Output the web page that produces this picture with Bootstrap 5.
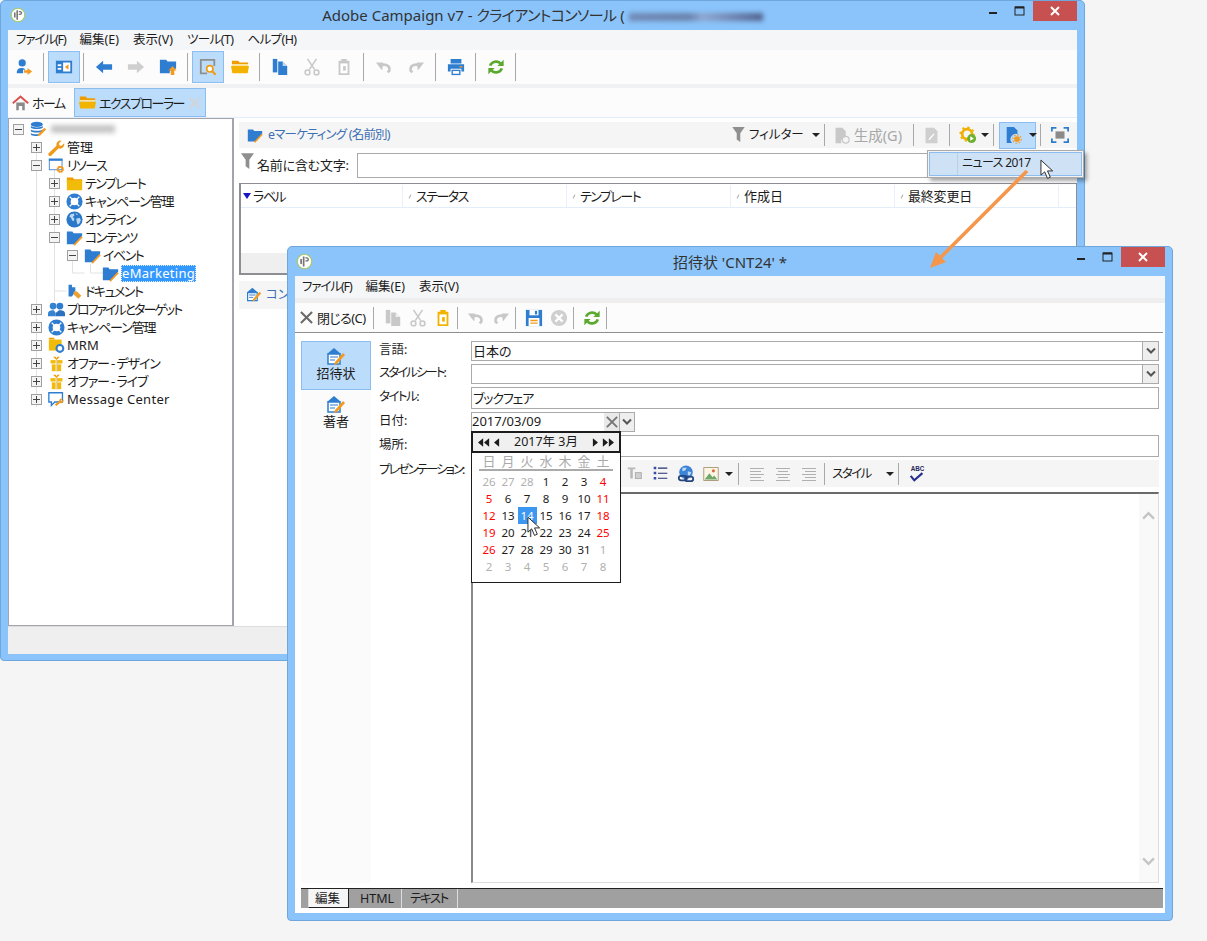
<!DOCTYPE html>
<html lang="ja">
<head>
  <meta charset="UTF-8" />
  <meta name="viewport" content="width=device-width, initial-scale=1" />
  <title>Adobe Campaign v7</title>
  <link href="https://cdn.jsdelivr.net/npm/bootstrap@5.3.3/dist/css/bootstrap.min.css" rel="stylesheet" />
  <style>
    body { width: 1207px; height: 941px; position: relative; overflow: hidden; background: #f5f5f5; color: #1c1c1c;
      font-family: "Noto Sans", "Noto Sans CJK JP", sans-serif; font-size: 13px; line-height: 18px; font-feature-settings: "palt"; }
    svg { display: block; flex: none; }
    .svgdefs { position: absolute; }
    .kana { letter-spacing: -1.5px; } .kana1 { letter-spacing: -1.1px; } .kana2 { letter-spacing: -.6px; } .kana3 { letter-spacing: -2px; } .kana4 { letter-spacing: -.8px; } .kana5 { letter-spacing: -.2px; }
    .c-blue { color: #2f7dd1; } .c-off { color: #c8c8c8; } .c-off2 { color: #cfcfcf; } .c-amber { color: #f0b400; } .c-ink { color: #1c1c1c; } .c-x { color: #777; } .c-tabx { color: #d4d4d4; }
    .mr3 { margin-right: 3px; } .mr4 { margin-right: 4px; } .mr5 { margin-right: 5px; } .ml2 { margin-left: 2px; } .ml5 { margin-left: 5px; } .ml6 { margin-left: 6px; }

    /* windows on the desktop */
    .appwin { position: absolute; display: flex; flex-direction: column; background: #8ac4fb; border: 1px solid #6fa6dc; border-radius: 5px 5px 4px 4px; padding: 0 7px 6px; }
    .win-main { left: 0; top: 0; width: 1085px; height: 661px; }
    .win-dlg { left: 287px; top: 246px; width: 886px; height: 675px; padding-bottom: 7px; }
    .titlebar { height: 29px; flex: none; display: flex; align-items: flex-start; }
    .title-side { width: 105px; flex: none; display: flex; height: 100%; }
    .title-logo { padding: 6px 0 0 2px; }
    .win-dlg .title-logo { padding-left: 1px; }
    .win-title { flex-grow: 1; text-align: center; font-size: 15px; line-height: 29px; color: #333; }
    .win-dlg .win-title { padding-top: 1px; }
    .blurred { display: inline-block; height: 8px; background: linear-gradient(90deg, #6f88b4, #6a80a8 45%, #8ea6d0 55%, #50608a); filter: blur(2.5px); vertical-align: middle; }
    .blur-title { width: 134px; }
    .blur-root { width: 64px; background: #c4c4c4; }
    .wbtn { width: 27px; height: 20px; display: flex; align-items: center; justify-content: center; }
    .wbtn-close { width: 44px; background: #c75050; }
    .client { flex-grow: 1; min-height: 0; display: flex; flex-direction: column; background: #fff; }

    /* menu and tool rows */
    .menubar { height: 20px; flex: none; background: #f5f6f8; display: flex; align-items: center; padding-left: 8px; gap: 14px; font-size: 12.5px; }
    .toolrow { height: 34px; flex: none; background: #fcfcfc; display: flex; align-items: center; }
    .strip { height: 4px; flex: none; background: #f0f1f3; }
    .tbtn { width: 32px; height: 32px; flex: none; display: flex; align-items: center; justify-content: center; }
    .tbtn-on { background: #bcdcfb; border: 1px solid #8cbdf0; }
    .tsep { width: 1px; height: 28px; flex: none; background: #a8a8a8; margin: 0 4px 0 3px; }
    .tabrow { height: 30px; flex: none; background: #fcfcfc; border-bottom: 1px solid #e3eefa; display: flex; align-items: flex-end; font-size: 13px; }
    .wintab { height: 29px; display: flex; align-items: center; white-space: nowrap; }
    .wintab-home { width: 65px; }
    .wintab-on { background: #bcdcfb; border: 1px solid #8cbdf0; width: 132px; padding-left: 4px; margin-left: 1px; }

    .mainbody { flex-grow: 1; min-height: 0; display: flex; }
    .statusbar { height: 28px; flex: none; background: #efefef; border-top: 1px solid #ddd; }

    /* tree */
    .treebox { width: 226px; flex: none; position: relative; background: #fff; border: 1px solid #a4a4ac; border-right-width: 2px; padding-top: 1px; }
    .treelines { position: absolute; left: 0; top: 0; }
    .trow { height: 18px; display: flex; align-items: center; position: relative; }
    .lv0 { padding-left: 4px; } .lv1 { padding-left: 22px; } .lv2 { padding-left: 40px; } .lv3 { padding-left: 58px; } .lv4 { padding-left: 76px; }
    .xbox { width: 11px; height: 11px; flex: none; margin-right: 6px; border: 1px solid #a0a0a0; background: #f4f4f4; position: relative; }
    .xbox::before { content: ""; position: absolute; left: 1px; right: 1px; top: 4px; height: 1px; background: #444; }
    .xplus::after { content: ""; position: absolute; top: 1px; bottom: 1px; left: 4px; width: 1px; background: #444; }
    .xnone { border: 0; background: none; }
    .xnone::before { display: none; }
    .tlabel { margin-left: 2px; white-space: nowrap; }
    .tlatin { letter-spacing: .3px; }
    .tsel { background: #3399ff; color: #fff; outline: 1px dotted #dfeeff; outline-offset: -1px; padding: 0 1px; margin-left: 2px; height: 17px; line-height: 17px; }

    /* right hand panel */
    .rightpane { width: 838px; flex: none; margin-left: 5px; padding-top: 4px; }
    .viewhead { height: 26px; background: #f5f5f5; display: flex; align-items: center; padding-left: 8px; color: #3d6fb4; font-size: 12.5px; }
    .vtool { display: flex; align-items: center; color: #1c1c1c; }
    .vt-gen { font-size: 14.5px; color: #a8a8a8; margin: 0 11px 0 8px; }
    .vt-edit { margin: 0 9px; }
    .vt-gear { margin: 0 4px 0 9px; }
    .vt-split { margin-left: 5px; height: 27px; width: 37px; }
    .vt-split svg { margin: 0 4px; }
    .vt-split i { width: 1px; height: 100%; background: #8cbdf0; }
    .vt-split .caret-dn { margin-left: 3px; }
    .vt-full { margin: 0 8px 0 10px; }
    .vsep { width: 1px; height: 22px; background: #a8a8a8; flex: none; }
    .caret-dn { width: 0; height: 0; border-left: 4px solid transparent; border-right: 4px solid transparent; border-top: 4px solid #222; flex: none; }
    .caret-filter { margin: 0 4px 0 8px; }
    .caret-img { margin: 0 5px 0 2px; }
    .filterrow { height: 26px; margin-top: 4px; display: flex; align-items: center; }
    .filterrow svg { margin: -8px 3px 0 2px; }
    .filterbox { height: 25px; flex-grow: 1; margin-left: 8px; background: #fff; border: 1px solid #aaa; }
    .listbox { height: 92px; margin-top: 5px; border: 1px solid #8d8d94; border-width: 1px 1px 2px 2px; display: flex; flex-direction: column; }
    .listhead { height: 24px; flex: none; display: flex; align-items: center; border-bottom: 1px solid #e3eefa; font-size: 13px; padding-top: 1px; }
    .lcol { width: 164px; flex: none; display: flex; align-items: center; height: 100%; border-right: 1px solid #e8f0f8; padding-left: 14px; }
    .lcol-first { width: 162px; padding-left: 2px; }
    .lcol-first svg { margin-right: 2px; }
    .sorttick { width: 4px; height: 1px; background: #aaa; transform: rotate(-60deg); margin-right: 4px; margin-left: -9px; }
    .listfoot { height: 20px; flex: none; margin-top: auto; background: #efefef; }
    .lowerbar { height: 28px; margin-top: 6px; background: #f5f5f5; display: flex; align-items: center; padding-left: 7px; color: #3d6fb4; font-size: 12.5px; }

    /* the popup under the split button */
    .newmenu { position: absolute; left: 927px; top: 150px; width: 157px; height: 28px; background: #f3f3f3; border: 1px solid #aaa; padding: 1px; box-shadow: 3px 3px 4px rgba(0,0,0,.35); font-size: 12px; }
    .newitem { height: 100%; background: #cfe2f5; border: 1px solid #8cbdf0; padding-left: 32px; line-height: 20px; position: relative; }
    .newitem::before { content: ""; position: absolute; left: 27px; top: 0; bottom: 0; width: 1px; background: #b7d0ea; }
    .overlay { position: absolute; left: 0; top: 0; pointer-events: none; z-index: 10; }

    /* dialog */
    .win-dlg .menubar { height: 22px; padding-left: 7px; }
    .strip-dlg { height: 5px; background: #eee; flex: none; }
    .toolrow-dlg { height: 30px; padding-left: 2px; margin-right: 2px; border-bottom: 1px solid #8f8f8f; font-size: 13px; }
    .closeitem { width: 76px; padding-left: 3px; color: #6a6a6a; }
    .dtool { height: 28px; flex: none; display: flex; align-items: center; justify-content: center; width: 25px; }
    .dsep { width: 1px; height: 22px; flex: none; background: #a8a8a8; }
    .dlgbody { flex-grow: 1; min-height: 0; display: flex; padding: 8px 6px 0; }
    .sidepanel { width: 70px; flex: none; background: #fbfbfb; text-align: center; font-size: 13px; }
    .sideitem { height: 49px; display: flex; flex-direction: column; align-items: center; padding-top: 5px; }
    .sideitem span { margin-top: -3px; }
    .sideitem-on { background: #bcdcfb; border: 1px solid #8cbdf0; }
    .formcol { flex-grow: 1; min-width: 0; margin-left: 8px; display: flex; flex-direction: column; gap: 3px; }
    .frow { display: flex; flex: none; position: relative; }
    .flabel { width: 92px; flex: none; font-size: 12.5px; white-space: nowrap; line-height: 18px; }
    .h22 .flabel, .frow-tools .flabel { padding-top: 1px; }
    .form-control.fld { border-radius: 0; border: 1px solid #aaa; padding: 0 1px 2px; font-size: 13px; line-height: 16px; min-height: 0; height: 100%; color: #1c1c1c; font-feature-settings: "palt"; }
    .form-control.fld-date { width: 133px; flex: none; border-right: 0; padding-left: 0; }
    .h20 { height: 20px; } .h22 { height: 22px; } .frow-tools { height: 27px; }
    .ddbtn { width: 16px; flex: none; display: flex; align-items: center; justify-content: center; background: #eee; border: 1px solid #aaa; border-left: 0; }
    .clrbtn + .ddbtn { border-left: 1px solid #aaa; }
    .clrbtn { width: 15px; flex: none; display: flex; align-items: center; justify-content: center; background: #e9e9e9; border-top: 1px solid #aaa; border-bottom: 1px solid #aaa; }

    /* calendar, drops over the form */
    .calpop { position: absolute; left: 92px; top: 19px; width: 150px; height: 152px; background: #fff; border: 1px solid #1c1c1c; z-index: 5; }
    .calhead { height: 21px; background: #f0f0f0; border: 1px solid #1c1c1c; border-width: 1px 1px 2px 1px; display: flex; align-items: center; padding: 0 5px; font-size: 12.5px; }
    .calgrid { display: grid; grid-template-columns: repeat(7, 19px); justify-content: center; margin-top: 2px; font-size: 11.5px; text-align: center; line-height: 17px; }
    .calwk { display: grid; grid-template-columns: repeat(7, 19px); justify-content: center; width: 134px; margin: 0 auto; border-bottom: 2px solid #aaa; color: #aaa; font-size: 13px; text-align: center; height: 18px; line-height: 17px; }
    .dim { color: #b0b0b0; } .red { color: #ff0000; } .today { background: #3d96f0; color: #fff; }

    .edtools { height: 27px; background: #f5f5f5; display: flex; align-items: center; padding-left: 150px; font-size: 12.5px; }
    .etool { width: 26px; flex: none; display: flex; align-items: center; justify-content: center; }
    .etool-img { width: 24px; }
    .estyle { margin-left: 7px; width: 54px; }
    .editor { flex-grow: 1; min-height: 0; margin: 2px 0 0 92px; border: 1px solid #ddd; border-top: 2px solid #6a6a6a; border-left: 2px solid #8a8a8a; background: #fff; display: flex; justify-content: flex-end; }
    .scrolltrack { width: 19px; background: #f9f9f9; display: flex; flex-direction: column; justify-content: space-between; align-items: center; padding: 17px 0 16px; }
    .chev-dn { transform: rotate(180deg); }
    .tabstrip { height: 20px; flex: none; margin: 5px 2px 5px 6px; background: #a0a0a0; border-top: 1px solid #222; display: flex; padding-left: 7px; font-size: 12.5px; line-height: 17px; }
    .btab { padding: 1px 8px 0; height: 19px; border-right: 1px solid #ddd; }
    .btab-html { margin-left: 1px; padding-left: 9px; padding-right: 7px; }
    .btab-text { padding-right: 9px; }
    .btab-on { background: #f6f6f6; width: 41px; border-right: 1px solid #222; border-bottom: 1px solid #222; border-left: 1px solid #ddd; margin-right: 1px; padding: 1px 0 0 6px; }
  </style>
</head>
<body>

  <svg width="0" height="0" class="svgdefs">
    <defs>
      <symbol id="i-logo" viewBox="0 0 20 20"><circle cx="10" cy="10" r="8.5" fill="#fff" stroke="#a8c86a" stroke-width="1.4"/><path fill="#777" d="M8 4h2v12H8zM11 5h1.6c2 0 2.6 1.4 2.6 2.5S14.500 10 12.600 10H11V8.500h1.300c.8 0 1.200-.4 1.200-1s-.4-1-1.200-1H11zM5 7h2v6H5z"/></symbol>
      <symbol id="i-folder-y" viewBox="0 0 20 20"><path fill="#ef9d00" d="M1 3h7l1.500 2H19v3H1z"/><path fill="#f2bb0a" d="M1 6h18v12H1z"/></symbol>
      <symbol id="i-folder-open" viewBox="0 0 20 20"><path fill="#ee9c00" d="M1 3h7l1.500 2H19v2H1z"/><path fill="#fbe39a" d="M1 7h18v2H1z"/><path fill="#f2b400" d="M0 9h20l-1.500 8h-17z"/></symbol>
      <symbol id="i-folder-b" viewBox="0 0 20 20"><path fill="#2f7dd1" d="M1 3h6.500L9 5h10v3l-8.500 10H1z"/><path stroke="#f39a1f" stroke-width="2" fill="none" d="M9.500 19l9.500-10"/></symbol>
      <symbol id="i-buoy" viewBox="0 0 20 20"><circle cx="10" cy="10" r="7" fill="none" stroke="#2f7dd1" stroke-width="5"/><path stroke="#fff" stroke-width="1.500" d="M2 10h4.500M13.500 10H18M10 2v4.500M10 13.500V18" transform="rotate(45 10 10)"/></symbol>
      <symbol id="i-globe" viewBox="0 0 20 20"><circle cx="10" cy="10" r="9.500" fill="#2b78c8"/><path fill="#bcd9f3" d="M5 4l4-1 1 2-2 2 2 2-1 3-2-1-1-3-2-1zM12 9l4-1 1.500 3-2 4-2 1-1-4zM11 2.500l3 1-1 1.500z"/></symbol>
      <symbol id="i-wrench" viewBox="0 0 20 20"><path fill="#f09a1c" d="M1 16.500L10 8a5 5 0 0 1 6-6l-3 3 .5 2.500L16 8l3-3a5 5 0 0 1-6.500 6L4 19.500a2 2 0 0 1-3-3z"/></symbol>
      <symbol id="i-res" viewBox="0 0 20 20"><rect x="1.500" y="2.500" width="15" height="12.500" fill="#fff" stroke="#2f7dd1"/><rect x="1" y="2" width="16" height="2.500" fill="#2f7dd1"/><circle cx="14.500" cy="14.500" r="3" fill="none" stroke="#f39a1f" stroke-width="2.500" stroke-dasharray="1.700 .6"/><circle cx="14.500" cy="14.500" r="2.800" fill="none" stroke="#f39a1f" stroke-width="1.500"/></symbol>
      <symbol id="i-doctag" viewBox="0 0 20 20"><path fill="#2f7dd1" d="M3 2h4v3h4v5l-4 6H3z"/><path fill="#f0a030" d="M9 10h4l5 5-3.500 3.500-5.500-5z"/></symbol>
      <symbol id="i-users" viewBox="0 0 20 20"><circle cx="6" cy="6" r="4" fill="#3583d2"/><circle cx="14" cy="6" r="4" fill="#2f7dd1"/><path fill="#3583d2" d="M0 18v-3c0-3 3-4 5-4h2l2 3v4z"/><path fill="#2a71bf" d="M20 18v-3c0-3-3-4-5-4h-2l-4 3v4z"/></symbol>
      <symbol id="i-mrm" viewBox="0 0 20 20"><path fill="#ef9d00" d="M1 1h6l1 2H1z"/><path fill="#f2bb0a" d="M1 3h15v13H1z"/><circle cx="14" cy="13.500" r="4" fill="#fff" stroke="#2f7dd1" stroke-width="2.400"/></symbol>
      <symbol id="i-gift" viewBox="0 0 20 20"><path fill="#ef9d00" d="M10 6L6 2h3l1 2 1-2h3z"/><rect x="3" y="6" width="14" height="4" fill="#f2bb0a"/><rect x="4.500" y="11" width="11" height="8" fill="#f2bb0a"/><path fill="#fff" d="M9 6h2v13H9z"/><path fill="#b36b00" opacity=".6" d="M10 6h1v13h-1z"/></symbol>
      <symbol id="i-msg" viewBox="0 0 20 20"><path fill="#fff" stroke="#2f7dd1" stroke-width="1.600" d="M1 2h16v11H8l-4 4v-4H1z"/><path fill="#f09a1c" d="M8 16l5-4a3 3 0 0 1 4-3l-2 2 1 1 2-2a3 3 0 0 1-4 4l-4 3.500z"/></symbol>
      <symbol id="i-db" viewBox="0 0 20 20"><ellipse cx="8" cy="4" rx="7" ry="3" fill="#2f7dd1"/><path fill="#2f7dd1" d="M1 6c2 2 12 2 14 0v2c-2 2-12 2-14 0zM1 10c2 2 12 2 14 0v2c-2 2-12 2-14 0zM1 14c2 2 8 2 9 1v2c-2 1-8 1-9-1z"/><path fill="#f39a1f" d="M17 8l2 2-7 7-3 1 1-3z"/></symbol>
      <symbol id="i-useradd" viewBox="0 0 20 20"><circle cx="8" cy="5.500" r="4" fill="#2f7dd1"/><path fill="#2f7dd1" d="M2 17c0-5 2-6 6-6 2 0 3 1 3.500 2H9v4z"/><path fill="#f39a1f" d="M10 13.500h4V11l5 4-5 4v-2.500h-4z"/></symbol>
      <symbol id="i-panel" viewBox="0 0 20 20"><rect x="1" y="3" width="18" height="14" fill="#2f7dd1"/><rect x="3" y="7" width="4" height="2" fill="#fff"/><rect x="3" y="11" width="4" height="2" fill="#fff"/><path fill="#fff" d="M9 5h8v10H9z"/><path fill="#f39a1f" d="M11 10l4-3v6z"/></symbol>
      <symbol id="i-left" viewBox="0 0 20 20"><path fill="currentColor" d="M1 10l8-7v4h10v6H9v4z"/></symbol>
      <symbol id="i-right" viewBox="0 0 20 20"><path fill="currentColor" d="M19 10l-8-7v4H1v6h10v4z"/></symbol>
      <symbol id="i-upfolder" viewBox="0 0 20 20"><path fill="#2f7dd1" d="M1 2h7l1.500 2H19v8h-4l-3 3v2H1z"/><path fill="#f39a1f" d="M15 9l4.500 5H17v5h-4v-5h-2.500z"/></symbol>
      <symbol id="i-search" viewBox="0 0 20 20"><path fill="none" stroke="#8f8f8f" stroke-width="2" d="M9 17H2V2h15v7"/><circle cx="12" cy="12" r="3.500" fill="#fff" stroke="#ee9c10" stroke-width="1.800"/><path stroke="#ee9c10" stroke-width="2.400" d="M14.500 14.500l4 4"/></symbol>
      <symbol id="i-copy" viewBox="0 0 20 20"><path fill="currentColor" d="M2 1h5v15H2z"/><path fill="currentColor" d="M8 4h5l5 5v10H8z"/><path fill="#fff" opacity=".7" d="M13 4v5h5z"/></symbol>
      <symbol id="i-cut" viewBox="0 0 20 20"><path fill="none" stroke="currentColor" stroke-width="1.700" d="M5 1l8 12M15 1L7 13"/><circle cx="5" cy="16" r="2.700" fill="none" stroke="currentColor" stroke-width="1.700"/><circle cx="15" cy="16" r="2.700" fill="none" stroke="currentColor" stroke-width="1.700"/></symbol>
      <symbol id="i-paste" viewBox="0 0 20 20"><path fill="currentColor" d="M7 1h6v2h3v16H4V3h3z"/><path fill="#fff" d="M6 6h8v11H6z"/><path fill="currentColor" d="M9 9h3v5H9z"/></symbol>
      <symbol id="i-undo" viewBox="0 0 20 20"><path fill="none" stroke="currentColor" stroke-width="3" d="M5 9c4-3 12-2 11 5l-2 2"/><path fill="currentColor" d="M1 5h8l-1 9z"/></symbol>
      <symbol id="i-redo" viewBox="0 0 20 20"><path fill="none" stroke="currentColor" stroke-width="3" d="M15 9c-4-3-12-2-11 5l2 2"/><path fill="currentColor" d="M19 5h-8l1 9z"/></symbol>
      <symbol id="i-print" viewBox="0 0 20 20"><path fill="#2f7dd1" d="M4 1h12v5H4zM1 7h18v8h-3v-3H4v3H1z"/><path fill="#2f7dd1" d="M5 13h10v6H5z"/><path fill="#fff" d="M6.500 14.500h7v3h-7z"/><path fill="#f39a1f" d="M14 9h3v1.500h-3z"/></symbol>
      <symbol id="i-refresh" viewBox="0 0 20 20"><path fill="none" stroke="#5aa82e" stroke-width="3" d="M3.500 8.500A7 7 0 0 1 15 6M16.500 11.500A7 7 0 0 1 5 14"/><path fill="#5aa82e" d="M18.500 2v7h-7zM1.500 18v-7h7z"/></symbol>
      <symbol id="i-save" viewBox="0 0 20 20"><path fill="#2f7dd1" d="M1 1h18v18H1z"/><path fill="#fff" d="M5 1h10v6H5z"/><path fill="#2f7dd1" d="M11 2h2.500v4H11z"/><path fill="#fff" d="M4 10h12v9H4z"/><path fill="#f39a1f" d="M6 12h8v1.500H6zM6 15h8v1.500H6z"/></symbol>
      <symbol id="i-cancel" viewBox="0 0 20 20"><circle cx="10" cy="10" r="9" fill="#cfcfcf"/><path stroke="#fff" stroke-width="2.600" d="M6 6l8 8M14 6l-8 8"/></symbol>
      <symbol id="i-x" viewBox="0 0 14 14"><path stroke="currentColor" stroke-width="2.200" d="M1 1l12 12M13 1L1 13"/></symbol>
      <symbol id="i-funnel" viewBox="0 0 14 18"><path fill="#8f8f8f" d="M0 0h14L9 7v10l-4-3V7z"/></symbol>
      <symbol id="i-gendoc" viewBox="0 0 20 20"><path fill="#c8c8c8" d="M3 1h8l4 4v7a5 5 0 0 0-5 7H3z"/><circle cx="15" cy="15" r="4" fill="none" stroke="#c8c8c8" stroke-width="1.500"/></symbol>
      <symbol id="i-editdoc" viewBox="0 0 20 20"><path fill="#cfcfcf" d="M3 1h10l4 4v14H3z"/><path stroke="#fff" stroke-width="1.500" d="M7 15l6-7"/></symbol>
      <symbol id="i-gear" viewBox="0 0 20 20"><circle cx="9" cy="9" r="5.500" fill="none" stroke="#f0b000" stroke-width="3"/><circle cx="9" cy="9" r="7.500" fill="none" stroke="#f0b000" stroke-width="2" stroke-dasharray="2.500 3.400"/><circle cx="14" cy="14" r="5" fill="#6cb02e"/><path fill="#fff" d="M12.500 11.500l4 2.500-4 2.500z"/></symbol>
      <symbol id="i-newdoc" viewBox="0 0 20 20"><path fill="#2f7dd1" d="M3 1h8l4 4v4a6 6 0 0 0-6 10H3z"/><circle cx="14.500" cy="14.500" r="3.200" fill="#f39a1f"/><circle cx="14.500" cy="14.500" r="4.700" fill="none" stroke="#f39a1f" stroke-width="1.300" stroke-dasharray="1.800 1.800"/></symbol>
      <symbol id="i-full" viewBox="0 0 20 20"><path fill="none" stroke="#2f7dd1" stroke-width="2" d="M1 6V2h5M14 2h5v4M19 14v4h-5M6 18H1v-4"/><rect x="5" y="6" width="10" height="8" fill="#8a8a8a"/></symbol>
      <symbol id="i-invite" viewBox="0 0 20 20"><path fill="#2f7dd1" d="M8 1l7 6H1z"/><path fill="#fff" stroke="#2f7dd1" stroke-width="1.500" d="M2 7h12v10H2z"/><path stroke="#2f7dd1" stroke-width="1.200" d="M4 10h8M4 13h5"/><path fill="#f39a1f" d="M17 6l2 2-8 9-3 1 1-3z"/></symbol>
      <symbol id="i-tf" viewBox="0 0 20 20"><path fill="#b8b8b8" d="M2 3h9v2H8v11H5V5H2z"/><rect x="11" y="9" width="7" height="7" fill="#cfcfcf" stroke="#a8a8a8"/></symbol>
      <symbol id="i-list" viewBox="0 0 20 20"><path fill="#3a4aa8" d="M2 2h3v3H2zM2 8h3v3H2zM2 14h3v3H2z"/><path fill="#23306e" d="M7 3h11v1.300H7zM7 9h11v1.300H7zM7 15h11v1.300H7z"/></symbol>
      <symbol id="i-link" viewBox="0 0 20 20"><circle cx="10" cy="8" r="7.500" fill="#3c84d6"/><path fill="#bcd9f3" d="M6 3h5l-2 3-3 1zM12 7l4 1-2 4-2-1z"/><rect x="2" y="12" width="9" height="5" rx="2.500" fill="none" stroke="#26477e" stroke-width="2"/><rect x="9" y="13" width="9" height="5" rx="2.500" fill="none" stroke="#26477e" stroke-width="2"/></symbol>
      <symbol id="i-image" viewBox="0 0 20 20"><rect x="1" y="2" width="18" height="16" fill="#fdf6e6" stroke="#9c8a66"/><path fill="#6fa86a" d="M2 17l6-8 4 5 2-2 4 5z"/><circle cx="13" cy="6" r="2" fill="#e06a3a"/></symbol>
      <symbol id="i-aleft" viewBox="0 0 18 16"><path stroke="#b0b0b0" d="M2 2.500h14M2 5.500h11M2 8.500h14M2 11.500h11M2 14.500h14"/></symbol>
      <symbol id="i-acenter" viewBox="0 0 18 16"><path stroke="#b0b0b0" d="M2 2.500h14M4 5.500h10M2 8.500h14M4 11.500h10M2 14.500h14"/></symbol>
      <symbol id="i-aright" viewBox="0 0 18 16"><path stroke="#b0b0b0" d="M2 2.500h14M5 5.500h11M2 8.500h14M5 11.500h11M2 14.500h14"/></symbol>
      <symbol id="i-abc" viewBox="0 0 20 20"><text x="3" y="7" font-size="7" font-weight="700" font-family="Liberation Sans, sans-serif" fill="#2a2a5a">ABC</text><path fill="none" stroke="#27308f" stroke-width="2.400" d="M3 12l4 5 9-8"/></symbol>
      <symbol id="i-chev" viewBox="0 0 10 8"><path fill="none" stroke="#555" stroke-width="2" d="M1 1.500l4 4 4-4"/></symbol>
      <symbol id="i-chevup" viewBox="0 0 14 10"><path fill="none" stroke="#c4c4c4" stroke-width="2.600" d="M1 8.500l6-6 6 6"/></symbol>
      <symbol id="i-cursor" viewBox="0 0 16 22"><path fill="#fff" stroke="#222" d="M1 1v16l4-3.500 3 7 3-1.300-3-6.700h5.500z"/></symbol>
      <symbol id="i-rew" viewBox="0 0 14 10"><path fill="#1c1c1c" d="M6 0v10L0 5zM13 0v10L7 5z"/></symbol>
      <symbol id="i-prev" viewBox="0 0 7 10"><path fill="#1c1c1c" d="M6 0v10L0 5z"/></symbol>
      <symbol id="i-next" viewBox="0 0 7 10"><path fill="#1c1c1c" d="M1 0v10l6-5z"/></symbol>
      <symbol id="i-fwd" viewBox="0 0 14 10"><path fill="#1c1c1c" d="M1 0v10l6-5zM8 0v10l6-5z"/></symbol>
    </defs>
  </svg>

  <!-- main console window -->
  <div class="appwin win-main">
    <div class="titlebar">
      <div class="title-side title-logo"><svg width="16" height="16"><use href="#i-logo"/></svg></div>
      <div class="win-title">Adobe Campaign v7 - <span class="kana2">クライアントコンソール</span> ( <span class="blurred blur-title"></span></div>
      <div class="title-side justify-content-end">
        <div class="wbtn"><svg width="10" height="10"><path d="M1 7h8" stroke="#222" stroke-width="2"/></svg></div>
        <div class="wbtn"><svg width="12" height="10"><rect x="1" y="1" width="9" height="8" fill="none" stroke="#222" stroke-width="1"/><path d="M1 1.500h9" stroke="#222" stroke-width="2"/></svg></div>
        <div class="wbtn wbtn-close"><svg width="10" height="10"><path d="M1 1l8 8M9 1l-8 8" stroke="#fff" stroke-width="2"/></svg></div>
      </div>
    </div>
    <div class="client">
      <div class="menubar"><span class="kana1">ファイル(F)</span><span>編集(E)</span><span>表示(V)</span><span class="kana2">ツール(T)</span><span class="kana2">ヘルプ(H)</span></div>
      <div class="toolrow">
        <div class="tbtn"><svg width="18" height="18"><use href="#i-useradd"/></svg></div>
        <div class="tsep"></div>
        <div class="tbtn tbtn-on"><svg width="18" height="18"><use href="#i-panel"/></svg></div>
        <div class="tsep"></div>
        <div class="tbtn c-blue"><svg width="18" height="18"><use href="#i-left"/></svg></div>
        <div class="tbtn c-off2"><svg width="18" height="18"><use href="#i-right"/></svg></div>
        <div class="tbtn"><svg width="18" height="18"><use href="#i-upfolder"/></svg></div>
        <div class="tsep"></div>
        <div class="tbtn tbtn-on"><svg width="18" height="18"><use href="#i-search"/></svg></div>
        <div class="tbtn"><svg width="18" height="18"><use href="#i-folder-open"/></svg></div>
        <div class="tsep"></div>
        <div class="tbtn c-blue"><svg width="18" height="18"><use href="#i-copy"/></svg></div>
        <div class="tbtn c-off"><svg width="18" height="18"><use href="#i-cut"/></svg></div>
        <div class="tbtn c-off"><svg width="18" height="18"><use href="#i-paste"/></svg></div>
        <div class="tsep"></div>
        <div class="tbtn c-off"><svg width="18" height="18"><use href="#i-undo"/></svg></div>
        <div class="tbtn c-off"><svg width="18" height="18"><use href="#i-redo"/></svg></div>
        <div class="tsep"></div>
        <div class="tbtn"><svg width="18" height="18"><use href="#i-print"/></svg></div>
        <div class="tsep"></div>
        <div class="tbtn"><svg width="18" height="18"><use href="#i-refresh"/></svg></div>
        <div class="tsep"></div>
      </div>
      <div class="strip"></div>
      <div class="tabrow">
        <div class="wintab wintab-home ps-1"><svg width="17" height="17" viewBox="0 0 20 20" class="mr3"><path fill="#8a8a8a" d="M5 10h10v9h-3v-5H8v5H5z"/><path fill="none" stroke="#d9534f" stroke-width="2.400" d="M1 11l9-8 9 8"/></svg><span class="kana">ホーム</span></div>
        <div class="wintab wintab-on"><svg width="17" height="17" class="mr3"><use href="#i-folder-open"/></svg><span class="kana">エクスプローラー</span><svg width="12" height="12" class="ms-auto me-1 c-tabx"><use href="#i-x"/></svg></div>
      </div>
      <div class="mainbody">
        <div class="treebox">
          <svg class="treelines" width="224" height="400"><path fill="none" stroke="#e2e2e2" d="M27.500 28v260M45.500 46v136M45.500 172h12M63.500 136v18M63.500 154h12M81.500 145v9h13"/></svg>
          <div class="trow lv0"><span class="xbox"></span><svg width="17" height="17"><use href="#i-db"/></svg><span class="blurred blur-root ms-1"></span></div>
          <div class="trow lv1"><span class="xbox xplus"></span><svg width="17" height="17"><use href="#i-wrench"/></svg><span class="tlabel">管理</span></div>
          <div class="trow lv1"><span class="xbox"></span><svg width="17" height="17"><use href="#i-res"/></svg><span class="tlabel kana">リソース</span></div>
          <div class="trow lv2"><span class="xbox xplus"></span><svg width="17" height="17"><use href="#i-folder-y"/></svg><span class="tlabel kana">テンプレート</span></div>
          <div class="trow lv2"><span class="xbox xplus"></span><svg width="17" height="17"><use href="#i-buoy"/></svg><span class="tlabel kana1">キャンペーン管理</span></div>
          <div class="trow lv2"><span class="xbox xplus"></span><svg width="17" height="17"><use href="#i-globe"/></svg><span class="tlabel kana">オンライン</span></div>
          <div class="trow lv2"><span class="xbox"></span><svg width="17" height="17"><use href="#i-folder-b"/></svg><span class="tlabel kana">コンテンツ</span></div>
          <div class="trow lv3"><span class="xbox"></span><svg width="17" height="17"><use href="#i-folder-b"/></svg><span class="tlabel kana">イベント</span></div>
          <div class="trow lv4"><span class="xbox xnone"></span><svg width="17" height="17"><use href="#i-folder-b"/></svg><span class="tlabel tsel tlatin">eMarketing</span></div>
          <div class="trow lv2"><span class="xbox xnone"></span><svg width="17" height="17"><use href="#i-doctag"/></svg><span class="tlabel kana">ドキュメント</span></div>
          <div class="trow lv1"><span class="xbox xplus"></span><svg width="17" height="17"><use href="#i-users"/></svg><span class="tlabel kana3">プロファイルとターゲット</span></div>
          <div class="trow lv1"><span class="xbox xplus"></span><svg width="17" height="17"><use href="#i-buoy"/></svg><span class="tlabel kana1">キャンペーン管理</span></div>
          <div class="trow lv1"><span class="xbox xplus"></span><svg width="17" height="17"><use href="#i-mrm"/></svg><span class="tlabel">MRM</span></div>
          <div class="trow lv1"><span class="xbox xplus"></span><svg width="17" height="17"><use href="#i-gift"/></svg><span class="tlabel kana1">オファー - デザイン</span></div>
          <div class="trow lv1"><span class="xbox xplus"></span><svg width="17" height="17"><use href="#i-gift"/></svg><span class="tlabel kana1">オファー - ライブ</span></div>
          <div class="trow lv1"><span class="xbox xplus"></span><svg width="17" height="17"><use href="#i-msg"/></svg><span class="tlabel tlatin">Message Center</span></div>
        </div>
        <div class="rightpane">
          <div class="viewhead">
            <svg width="16" height="16" class="mr5"><use href="#i-folder-b"/></svg><span class="kana4">eマーケティング (名前別)</span>
            <div class="vtool ms-auto"><svg width="13" height="16" class="me-1"><use href="#i-funnel"/></svg>フィルター<span class="caret-dn caret-filter"></span></div>
            <div class="vsep"></div>
            <div class="vtool vt-gen"><svg width="17" height="17" class="me-1"><use href="#i-gendoc"/></svg>生成(G)</div>
            <div class="vsep"></div>
            <div class="vtool vt-edit"><svg width="17" height="17"><use href="#i-editdoc"/></svg></div>
            <div class="vsep"></div>
            <div class="vtool vt-gear"><svg width="18" height="18" class="mr4"><use href="#i-gear"/></svg><span class="caret-dn"></span></div>
            <div class="vsep"></div>
            <div class="vtool tbtn-on vt-split"><svg width="18" height="18"><use href="#i-newdoc"/></svg><i></i><span class="caret-dn"></span></div>
            <div class="vsep ms-1"></div>
            <div class="vtool vt-full"><svg width="18" height="18"><use href="#i-full"/></svg></div>
          </div>
          <div class="filterrow"><svg width="13" height="17"><use href="#i-funnel"/></svg><span class="kana5">名前に含む文字:</span><div class="filterbox"></div></div>
          <div class="listbox">
            <div class="listhead">
              <div class="lcol lcol-first"><svg width="8" height="6"><path d="M0 0h8L4 6z" fill="#1616c8"/></svg><span class="kana">ラベル</span></div>
              <div class="lcol"><span class="sorttick"></span><span class="kana">ステータス</span></div>
              <div class="lcol"><span class="sorttick"></span><span class="kana">テンプレート</span></div>
              <div class="lcol"><span class="sorttick"></span>作成日</div>
              <div class="lcol"><span class="sorttick"></span><span class="kana5">最終変更日</span></div>
            </div>
            <div class="listfoot"></div>
          </div>
          <div class="lowerbar"><svg width="16" height="16" class="me-1"><use href="#i-invite"/></svg>コン</div>
        </div>
      </div>
      <div class="statusbar"></div>
    </div>
  </div>

  <div class="newmenu"><div class="newitem kana2">ニュース 2017</div></div>
  <svg class="overlay" width="1207" height="941"><use href="#i-cursor" x="1040" y="159" width="15" height="21"/></svg>

  <!-- invitation dialog -->
  <div class="appwin win-dlg">
    <div class="titlebar">
      <div class="title-side title-logo"><svg width="17" height="17"><use href="#i-logo"/></svg></div>
      <div class="win-title">招待状 'CNT24' *</div>
      <div class="title-side justify-content-end">
        <div class="wbtn"><svg width="10" height="10"><path d="M1 7h8" stroke="#222" stroke-width="2"/></svg></div>
        <div class="wbtn"><svg width="12" height="10"><rect x="1" y="1" width="9" height="8" fill="none" stroke="#222" stroke-width="1"/><path d="M1 1.500h9" stroke="#222" stroke-width="2"/></svg></div>
        <div class="wbtn wbtn-close"><svg width="10" height="10"><path d="M1 1l8 8M9 1l-8 8" stroke="#fff" stroke-width="2"/></svg></div>
      </div>
    </div>
    <div class="client">
      <div class="menubar"><span class="kana1">ファイル(F)</span><span>編集(E)</span><span>表示(V)</span></div>
      <div class="strip-dlg"></div>
      <div class="toolrow toolrow-dlg">
        <div class="d-flex align-items-center closeitem"><svg width="13" height="13" class="me-1"><use href="#i-x"/></svg><span class="kana2 c-ink">閉じる(C)</span></div>
        <div class="dsep"></div>
        <div class="dtool ml6 c-off"><svg width="18" height="18"><use href="#i-copy"/></svg></div>
        <div class="dtool c-off"><svg width="18" height="18"><use href="#i-cut"/></svg></div>
        <div class="dtool c-amber"><svg width="18" height="18"><use href="#i-paste"/></svg></div>
        <div class="dsep ml2"></div>
        <div class="dtool ml5 c-off"><svg width="18" height="18"><use href="#i-undo"/></svg></div>
        <div class="dtool c-off"><svg width="18" height="18"><use href="#i-redo"/></svg></div>
        <div class="dsep ml2"></div>
        <div class="dtool ml5"><svg width="18" height="18"><use href="#i-save"/></svg></div>
        <div class="dtool"><svg width="18" height="18"><use href="#i-cancel"/></svg></div>
        <div class="dsep ml2"></div>
        <div class="dtool ml5"><svg width="18" height="18"><use href="#i-refresh"/></svg></div>
        <div class="dsep ml2"></div>
      </div>
      <div class="dlgbody">
        <div class="sidepanel">
          <div class="sideitem sideitem-on"><svg width="20" height="20"><use href="#i-invite"/></svg><span>招待状</span></div>
          <div class="sideitem"><svg width="20" height="20"><use href="#i-invite"/></svg><span>著者</span></div>
        </div>
        <div class="formcol">
          <div class="frow h20"><div class="flabel">言語:</div><input class="form-control fld" value="日本の" aria-label="言語"><div class="ddbtn"><svg width="10" height="8"><use href="#i-chev"/></svg></div></div>
          <div class="frow h20"><div class="flabel kana3">スタイルシート:</div><input class="form-control fld" aria-label="スタイルシート"><div class="ddbtn"><svg width="10" height="8"><use href="#i-chev"/></svg></div></div>
          <div class="frow h22"><div class="flabel kana">タイトル:</div><input class="form-control fld kana1" value="ブックフェア" aria-label="タイトル"></div>
          <div class="frow h20">
            <div class="flabel">日付:</div>
            <input class="form-control fld fld-date" value="2017/03/09" aria-label="日付">
            <div class="clrbtn c-x"><svg width="12" height="12"><use href="#i-x"/></svg></div>
            <div class="ddbtn"><svg width="10" height="8"><use href="#i-chev"/></svg></div>
            <div class="calpop">
              <div class="calhead">
                <svg width="12" height="9"><use href="#i-rew"/></svg><svg width="6" height="9" class="ms-1"><use href="#i-prev"/></svg>
                <span class="flex-grow-1 text-center">2017年 3月</span>
                <svg width="6" height="9" class="me-1"><use href="#i-next"/></svg><svg width="12" height="9"><use href="#i-fwd"/></svg>
              </div>
              <div class="calwk"><span>日</span><span>月</span><span>火</span><span>水</span><span>木</span><span>金</span><span>土</span></div>
              <div class="calgrid">
                <span class="dim">26</span><span class="dim">27</span><span class="dim">28</span><span>1</span><span>2</span><span>3</span><span class="red">4</span>
                <span class="red">5</span><span>6</span><span>7</span><span>8</span><span>9</span><span>10</span><span class="red">11</span>
                <span class="red">12</span><span>13</span><span class="today">14</span><span>15</span><span>16</span><span>17</span><span class="red">18</span>
                <span class="red">19</span><span>20</span><span>21</span><span>22</span><span>23</span><span>24</span><span class="red">25</span>
                <span class="red">26</span><span>27</span><span>28</span><span>29</span><span>30</span><span>31</span><span class="dim">1</span>
                <span class="dim">2</span><span class="dim">3</span><span class="dim">4</span><span class="dim">5</span><span class="dim">6</span><span class="dim">7</span><span class="dim">8</span>
              </div>
            </div>
          </div>
          <div class="frow h22"><div class="flabel">場所:</div><input class="form-control fld" aria-label="場所"></div>
          <div class="frow frow-tools">
            <div class="flabel kana3">プレゼンテーション:</div>
            <div class="edtools flex-grow-1">
              <div class="etool"><svg width="17" height="17"><use href="#i-tf"/></svg></div>
              <div class="etool"><svg width="17" height="17"><use href="#i-list"/></svg></div>
              <div class="etool"><svg width="18" height="18"><use href="#i-link"/></svg></div>
              <div class="etool etool-img"><svg width="16" height="16"><use href="#i-image"/></svg></div>
              <span class="caret-dn caret-img"></span>
              <div class="dsep"></div>
              <div class="etool ml5"><svg width="18" height="16"><use href="#i-aleft"/></svg></div>
              <div class="etool"><svg width="18" height="16"><use href="#i-acenter"/></svg></div>
              <div class="etool"><svg width="18" height="16"><use href="#i-aright"/></svg></div>
              <div class="dsep ml2"></div>
              <span class="kana estyle">スタイル</span>
              <span class="caret-dn mr4"></span>
              <div class="dsep"></div>
              <div class="etool ml5"><svg width="18" height="18"><use href="#i-abc"/></svg></div>
            </div>
          </div>
          <div class="editor">
            <div class="scrolltrack">
              <svg width="13" height="9"><use href="#i-chevup"/></svg>
              <svg width="13" height="9" class="chev-dn"><use href="#i-chevup"/></svg>
            </div>
          </div>
        </div>
      </div>
      <div class="tabstrip">
        <div class="btab btab-on">編集</div>
        <div class="btab btab-html">HTML</div>
        <div class="btab btab-text kana">テキスト</div>
      </div>
    </div>
  </div>

  <!-- orange arrow and mouse pointer lying over both windows -->
  <svg class="overlay" width="1207" height="941">
    <path d="M1027 171L940 258" stroke="#f6964a" stroke-width="3.500" fill="none"/>
    <path d="M930 268l6-16 10 10z" fill="#f6964a"/>
    <use href="#i-cursor" x="527" y="516" width="15" height="21"/>
  </svg>

  <script src="https://cdn.jsdelivr.net/npm/bootstrap@5.3.3/dist/js/bootstrap.bundle.min.js"></script>
</body>
</html>
